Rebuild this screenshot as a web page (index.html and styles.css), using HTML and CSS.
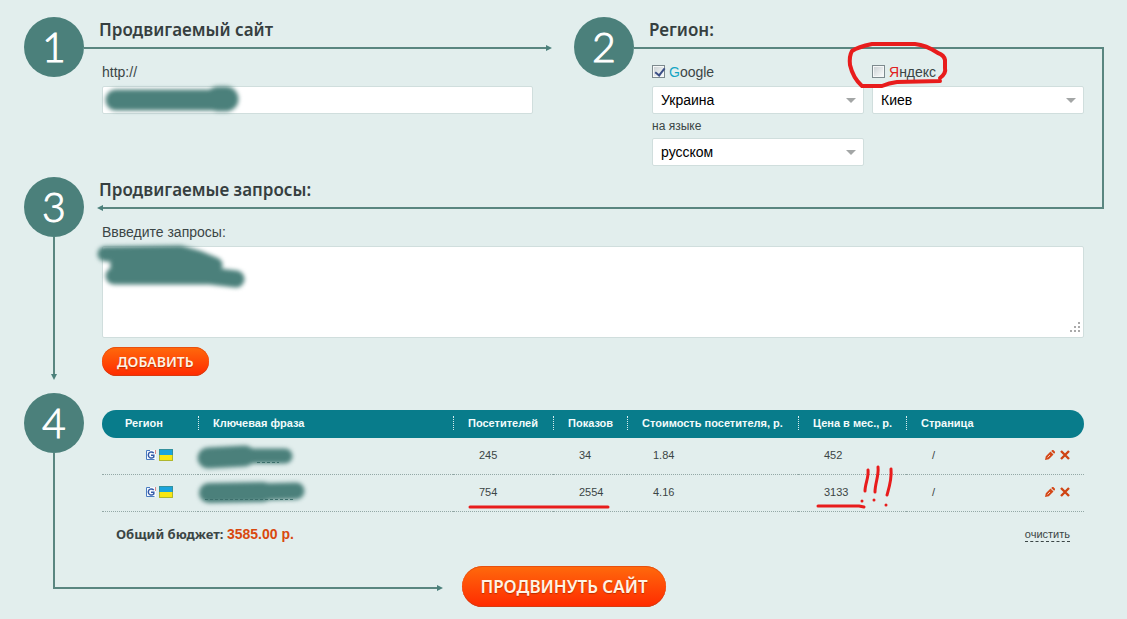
FILE: index.html
```html
<!DOCTYPE html>
<html lang="ru">
<head>
<meta charset="utf-8">
<title>Продвижение сайта</title>
<link rel="stylesheet" href="styles.css">
</head>
<body>
<form class="page">
  <div class="top">
    <section class="step">
      <div class="rail"><span class="num">1</span></div>
      <div class="body">
        <h2>Продвигаемый сайт</h2>
        <div class="line line-next"><i class="bar"></i><i class="tip right"></i></div>
        <div class="fields site">
          <label class="caption" for="url">http://</label>
          <div class="holder">
            <input class="box" id="url" type="text">
            <svg class="smudge smudge-url" width="160" height="44" viewBox="0 0 160 44"><path d="M24 23H134" stroke-width="21"/><path d="M126 22L134 22" stroke-width="25"/></svg>
          </div>
        </div>
      </div>
    </section>
    <section class="step">
      <div class="rail"><span class="num">2</span></div>
      <div class="body">
        <h2>Регион:</h2>
        <div class="region">
          <div class="col">
            <label class="caption"><input type="checkbox" checked><span><b class="g">G</b>oogle</span></label>
            <div class="select"><select aria-label="Страна"><option>Украина</option></select></div>
            <label class="small" for="lang">на языке</label>
            <div class="select"><select id="lang"><option>русском</option></select></div>
          </div>
          <div class="col">
            <label class="caption"><input type="checkbox"><span><b class="y">Я</b>ндекс</span></label>
            <div class="select"><select aria-label="Город"><option>Киев</option></select></div>
            <svg class="mark loop" width="106" height="54" viewBox="0 0 106 54"><path d="M94 38C98 35 100 32 99 28V20Q98 15 92 13Q80 5 69 4H26Q12 7 6 11Q3 16 4 25Q7 38 16 46H36Q43 43 51 42L94 41"/></svg>
          </div>
        </div>
      </div>
    </section>
  </div>

  <section class="step">
    <div class="rail"><span class="num">3</span><i class="stem"></i><i class="tip down"></i></div>
    <div class="body">
      <h2 class="edge">Продвигаемые запросы:</h2>
      <div class="line line-back"><i class="tip left"></i><i class="bar"></i></div>
      <div class="fields">
        <label class="caption" for="queries">Ввведите запросы:</label>
        <div class="holder">
          <textarea class="box" id="queries"></textarea>
          <svg class="grip" width="10" height="10" viewBox="0 0 10 10"><path d="M8 0h2v2H8zM4 4h2v2H4zM8 4h2v2H8zM0 8h2v2H0zM4 8h2v2H4zM8 8h2v2H8z"/></svg>
          <svg class="smudge smudge-query" width="170" height="64" viewBox="0 0 170 64"><path d="M23 23L98 22L116 27L133 34" stroke-width="15"/><path d="M38 33L123 36" stroke-width="20"/><path d="M32 45H128L154 48" stroke-width="17"/></svg>
        </div>
        <button class="pill add" type="button">ДОБАВИТЬ</button>
      </div>
    </div>
  </section>

  <section class="step result">
    <div class="rail"><span class="num">4</span><i class="stem"></i></div>
    <div class="body">
      <table>
        <colgroup><col class="c1"><col><col class="c3"><col class="c4"><col class="c5"><col class="c6"><col class="c7"></colgroup>
        <thead><tr>
          <th>Регион</th><th><span>Ключевая фраза</span></th><th><span>Посетителей</span></th><th><span>Показов</span></th><th><span>Стоимость посетителя, р.</span></th><th><span>Цена в мес., р.</span></th><th><span>Страница</span></th>
        </tr></thead>
        <tbody>
          <tr>
            <td><div class="icons">
              <svg width="10" height="10" viewBox="0 0 10 10"><path fill="#f6faff" d="M0 0h10v10H0z"/><path fill="none" stroke="#4a7cc0" d="M4 .5H.5v9h8"/><path fill="none" stroke="#d98a8a" d="M9.500 0v4"/><path fill="none" stroke="#345aa8" stroke-width="1.500" d="M7.800 3C5.500 1 2.300 2 2.300 5S5.500 9 7.800 7V5.300H5"/></svg>
              <svg width="14" height="12" viewBox="0 0 14 12"><path fill="#1ba4dc" d="M0 0h14v6H0z"/><path fill="#f8e713" d="M0 6h14v6H0z"/><path fill="none" stroke="#557a50" stroke-opacity=".45" d="M.5.5h13v11H.5z"/></svg>
            </div></td>
            <td><div class="phrase"><svg class="smudge" width="120" height="40" viewBox="0 0 120 40"><path d="M20 22L57 20" stroke-width="21"/><path d="M58 20H97" stroke-width="15"/></svg><svg class="dashes" width="120" height="40" viewBox="0 0 120 40"><path d="M69 26.500h22"/></svg></div></td>
            <td>245</td><td>34</td><td>1.84</td><td>452</td>
            <td><div class="last"><span>/</span><span class="tools">
              <button type="button" aria-label="Изменить"><svg width="10" height="10" viewBox="0 0 10 10"><path fill="#d4491a" d="M0 10l.8-3.800L5.500 1.500 8.500 4.500 3.800 9.200zM6.200.9L7.300 0h1L10 1.700v1L9.100 3.800z"/><path stroke="#f5c9b5" d="M2.500 7.500L5 5"/></svg></button>
              <button type="button" aria-label="Удалить"><svg width="10" height="10" viewBox="0 0 10 10"><path stroke="#cf4413" stroke-width="2.400" d="M1 1l8 8M9 1L1 9"/></svg></button>
            </span></div></td>
          </tr>
          <tr>
            <td><div class="icons">
              <svg width="10" height="10" viewBox="0 0 10 10"><path fill="#f6faff" d="M0 0h10v10H0z"/><path fill="none" stroke="#4a7cc0" d="M4 .5H.5v9h8"/><path fill="none" stroke="#d98a8a" d="M9.500 0v4"/><path fill="none" stroke="#345aa8" stroke-width="1.500" d="M7.800 3C5.500 1 2.300 2 2.300 5S5.500 9 7.800 7V5.300H5"/></svg>
              <svg width="14" height="12" viewBox="0 0 14 12"><path fill="#1ba4dc" d="M0 0h14v6H0z"/><path fill="#f8e713" d="M0 6h14v6H0z"/><path fill="none" stroke="#557a50" stroke-opacity=".45" d="M.5.5h13v11H.5z"/></svg>
            </div></td>
            <td><div class="phrase"><svg class="smudge" width="120" height="40" viewBox="0 0 120 40"><path d="M21 20L75 19" stroke-width="20"/><path d="M70 19L108 18" stroke-width="17"/></svg><svg class="dashes" width="120" height="40" viewBox="0 0 120 40"><path d="M17 26.500h90"/></svg></div></td>
            <td><div class="anchor">754<svg class="mark under" width="144" height="6" viewBox="0 0 144 6"><path d="M2 3H140"/></svg></div></td>
            <td>2554</td><td>4.16</td>
            <td><div class="anchor">3133<svg class="mark bang" width="80" height="52" viewBox="0 0 80 52"><path d="M2 46H43L48 47M52 10C53 17 49 24 49 31M62 7C63 16 59 23 59 32M75 9C76 19 73 28 71 35"/><path class="dot" d="M46 41v0M58 40v0M70 45v0"/></svg></div></td>
            <td><div class="last"><span>/</span><span class="tools">
              <button type="button" aria-label="Изменить"><svg width="10" height="10" viewBox="0 0 10 10"><path fill="#d4491a" d="M0 10l.8-3.800L5.500 1.500 8.500 4.500 3.800 9.200zM6.200.9L7.300 0h1L10 1.700v1L9.100 3.800z"/><path stroke="#f5c9b5" d="M2.500 7.500L5 5"/></svg></button>
              <button type="button" aria-label="Удалить"><svg width="10" height="10" viewBox="0 0 10 10"><path stroke="#cf4413" stroke-width="2.400" d="M1 1l8 8M9 1L1 9"/></svg></button>
            </span></div></td>
          </tr>
        </tbody>
      </table>
      <div class="total">
        <p>Общий бюджет: <b>3585.00 р.</b></p>
        <a href="#">очистить</a>
      </div>
    </div>
  </section>

  <div class="finish">
    <div class="corner"><i class="turn"></i><i class="tip right"></i></div>
    <button class="pill go" type="submit">ПРОДВИНУТЬ САЙТ</button>
  </div>
</form>
</body>
</html>
```
FILE: styles.css
```css
* { box-sizing: border-box; }
body {
  margin: 0;
  background: #e2eeed;
  color: #3b4545;
  font: 14px/20px "Liberation Sans", Arial, sans-serif;
}
.page { padding: 17px 23px 12px 24px; }
.top { display: grid; grid-template-columns: 550fr 530fr; }
.step { display: flex; min-width: 0; }
.rail { width: 60px; flex: none; display: flex; flex-direction: column; align-items: center; }
.num {
  width: 60px; height: 60px; flex: none;
  border-radius: 50%;
  background: #4b807b;
  color: #fff;
  text-align: center;
  font: 300 41px/60px Lato, sans-serif;
  -webkit-text-stroke: 1px #fff;
}
.stem { width: 2px; flex: 1; background: #5a8680; }
.body { flex: 1; min-width: 0; }

h2 {
  margin: 0; height: 30px; padding-left: 15px;
  color: #363f40;
  font: 600 17px/26px "Noto Sans", sans-serif;
}
.edge { border-right: 2px solid #5a8680; }

/* connector lines and arrowheads */
.line { display: flex; align-items: center; height: 2px; }
.line-next { margin-right: 22px; }
.line-back { margin-left: 13px; }
.bar { flex: 1; height: 2px; background: #5a8680; }
.tip { flex: none; border: 3px solid transparent; }
.right { border-left: 6px solid #4b807b; border-right: 0; }
.left { border-right: 6px solid #4b807b; border-left: 0; }
.down { border-top: 6px solid #4b807b; border-bottom: 0; margin-bottom: 13px; }

.fields { padding: 13px 20px 17px 18px; }
.site { padding-right: 41px; }
.region {
  display: flex; gap: 8px;
  padding: 13px 18px 11px 18px;
  border: 2px solid #5a8680; border-width: 2px 2px 0 0;
}
.col { flex: 1; position: relative; }
.caption { display: flex; align-items: center; gap: 4px; height: 20px; margin-bottom: 4px; }
.small { display: block; margin: 4px 0; font-size: 12px; line-height: 16px; }
.caption b { font-weight: 400; }
.g { color: #16a5c4; }
.y { color: #e02020; }

input[type="checkbox"] {
  appearance: none; flex: none;
  width: 13px; height: 13px; margin: 0 0 2px 0;
  border: 1px solid #7d8a8e;
  background: linear-gradient(135deg, #cdd3d6, #f8fafa) content-box, #f6f8f8;
  padding: 1px;
  position: relative;
}
input[type="checkbox"]:checked::after {
  content: ""; position: absolute; left: 4px; top: 0;
  width: 4px; height: 8px;
  border: solid #3c4f86; border-width: 0 2px 2px 0;
  transform: rotate(38deg);
}

.box, select {
  display: block; width: 100%; height: 28px; margin: 0;
  border: 1px solid #d0dedd; border-radius: 2px;
  background: #fff; color: #000;
  font: 14px/20px "Liberation Sans", Arial, sans-serif;
}
select { appearance: none; padding: 0 24px 0 8px; }
textarea.box { height: 92px; resize: none; }
.select, .holder, .anchor, .phrase { position: relative; }
.select::after {
  content: ""; position: absolute; right: 8px; top: 12px;
  border: 5px solid transparent; border-top-color: #a3a6a6; border-bottom: 0;
  pointer-events: none;
}
.grip { position: absolute; right: 4px; bottom: 6px; fill: #aaa; }

.pill {
  border: 0; border-radius: 24px;
  background: linear-gradient(#ff6a0c, #ff2a00);
  box-shadow: inset 0 1px #e8500f, inset 0 -1px #d63a10;
  color: #fff3e4;
  text-shadow: 0 1px 1px #b83000;
  font-family: "Noto Sans", sans-serif; font-weight: 600;
  white-space: nowrap;
}
.add { display: block; margin-top: 9px; height: 29px; padding: 0 15px; font-size: 14px; }
.go { height: 41px; padding: 0 18px; font-size: 17px; }

.result .body { padding: 17px 20px 0 18px; }
table { width: 100%; table-layout: fixed; border-collapse: separate; border-spacing: 0; font-size: 11px; line-height: 14px; }
.c1 { width: 96px; }
.c3 { width: 100px; }
.c4 { width: 74px; }
.c5 { width: 171px; }
.c6 { width: 108px; }
.c7 { width: 178px; }
th { height: 28px; padding: 0 0 2px; background: #087c8b; color: #f2fbfb; text-align: left; white-space: nowrap; }
th:first-child { padding-left: 23px; border-radius: 14px 0 0 14px; }
th:last-child { border-radius: 0 14px 14px 0; }
th span { display: block; border-left: 1px dotted #d5ecee; padding-left: 14px; }
td { height: 37px; padding: 0 0 2px 26px; border-bottom: 1px dotted #93a8a6; }
td:first-child { padding-left: 44px; }
td:nth-child(2) { padding-left: 0; }
.icons { display: flex; align-items: center; gap: 3px; }
.phrase { height: 14px; }
.last { display: flex; justify-content: space-between; align-items: center; padding-right: 14px; }
.tools { display: flex; gap: 5px; }
.tools button { display: block; border: 0; padding: 0; background: none; }
.tools svg { display: block; }

.total { display: flex; justify-content: space-between; align-items: center; height: 54px; padding: 0 14px 10px; }
.total p { margin: 0; font: 700 13px/18px "Noto Sans", sans-serif; }
.total p b { color: #d9480f; font: 700 14px/18px "Liberation Sans", Arial, sans-serif; }
.total a { color: #3b4545; font-size: 11px; line-height: 14px; text-decoration: none; border-bottom: 1px dashed #3b4545; }

.finish { display: grid; grid-template-columns: 1fr auto 1fr; }
.corner { display: flex; align-items: flex-end; height: 25px; margin: 0 19px 0 29px; }
.turn { flex: 1; height: 23px; margin-bottom: 2px; border: solid #5a8680; border-width: 0 0 2px 2px; }

/* pen marks and smudges drawn over the form */
.smudge { position: absolute; fill: none; stroke: #4b807b; stroke-linecap: round; stroke-linejoin: round; filter: blur(2px); pointer-events: none; }
.smudge-url { left: -10px; top: -9px; }
.smudge-query { left: -20px; top: -15px; }
.phrase .smudge, .dashes { position: absolute; left: -10px; top: -12px; }
.dashes { stroke: #3c6f6c; stroke-dasharray: 3 2; pointer-events: none; }
.mark { position: absolute; fill: none; stroke: #e81c1c; stroke-width: 3px; stroke-linecap: round; stroke-linejoin: round; pointer-events: none; }
.loop { left: -26px; top: -22px; stroke-width: 4px; }
.under { left: -11px; top: 19px; }
.bang { left: -8px; top: -25px; }
```
